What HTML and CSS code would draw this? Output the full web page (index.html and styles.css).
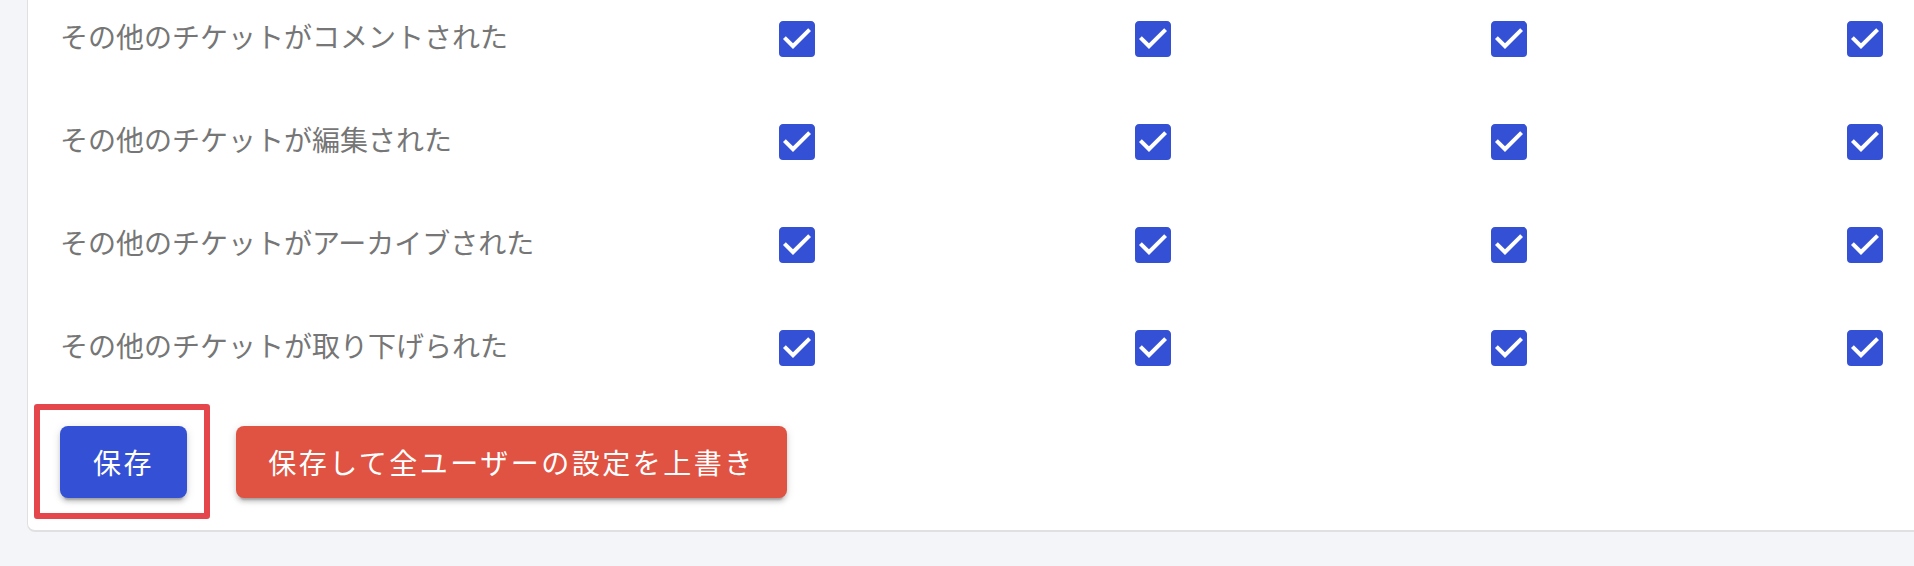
FILE: index.html
```html
<!DOCTYPE html>
<html>
  <head>
    <meta charset="utf-8">
    <title>通知設定</title>
    <link rel="stylesheet" href="styles.css">
  </head>
  <body>
    <div class="card">

      <div class="notify-row">
        <div class="label">その他のチケットがコメントされた</div>
        <div class="cell"><svg class="check" viewBox="0 0 24 24"><path d="M10,17L5,12L6.41,10.58L10,14.17L17.59,6.58L19,8M19,3H5C3.89,3 3,3.89 3,5V19A2,2 0 0,0 5,21H19A2,2 0 0,0 21,19V5C21,3.89 20.1,3 19,3Z"/></svg></div>
        <div class="cell"><svg class="check" viewBox="0 0 24 24"><path d="M10,17L5,12L6.41,10.58L10,14.17L17.59,6.58L19,8M19,3H5C3.89,3 3,3.89 3,5V19A2,2 0 0,0 5,21H19A2,2 0 0,0 21,19V5C21,3.89 20.1,3 19,3Z"/></svg></div>
        <div class="cell"><svg class="check" viewBox="0 0 24 24"><path d="M10,17L5,12L6.41,10.58L10,14.17L17.59,6.58L19,8M19,3H5C3.89,3 3,3.89 3,5V19A2,2 0 0,0 5,21H19A2,2 0 0,0 21,19V5C21,3.89 20.1,3 19,3Z"/></svg></div>
        <div class="cell"><svg class="check" viewBox="0 0 24 24"><path d="M10,17L5,12L6.41,10.58L10,14.17L17.59,6.58L19,8M19,3H5C3.89,3 3,3.89 3,5V19A2,2 0 0,0 5,21H19A2,2 0 0,0 21,19V5C21,3.89 20.1,3 19,3Z"/></svg></div>
      </div>

      <div class="notify-row">
        <div class="label">その他のチケットが編集された</div>
        <div class="cell"><svg class="check" viewBox="0 0 24 24"><path d="M10,17L5,12L6.41,10.58L10,14.17L17.59,6.58L19,8M19,3H5C3.89,3 3,3.89 3,5V19A2,2 0 0,0 5,21H19A2,2 0 0,0 21,19V5C21,3.89 20.1,3 19,3Z"/></svg></div>
        <div class="cell"><svg class="check" viewBox="0 0 24 24"><path d="M10,17L5,12L6.41,10.58L10,14.17L17.59,6.58L19,8M19,3H5C3.89,3 3,3.89 3,5V19A2,2 0 0,0 5,21H19A2,2 0 0,0 21,19V5C21,3.89 20.1,3 19,3Z"/></svg></div>
        <div class="cell"><svg class="check" viewBox="0 0 24 24"><path d="M10,17L5,12L6.41,10.58L10,14.17L17.59,6.58L19,8M19,3H5C3.89,3 3,3.89 3,5V19A2,2 0 0,0 5,21H19A2,2 0 0,0 21,19V5C21,3.89 20.1,3 19,3Z"/></svg></div>
        <div class="cell"><svg class="check" viewBox="0 0 24 24"><path d="M10,17L5,12L6.41,10.58L10,14.17L17.59,6.58L19,8M19,3H5C3.89,3 3,3.89 3,5V19A2,2 0 0,0 5,21H19A2,2 0 0,0 21,19V5C21,3.89 20.1,3 19,3Z"/></svg></div>
      </div>

      <div class="notify-row">
        <div class="label">その他のチケットがアーカイブされた</div>
        <div class="cell"><svg class="check" viewBox="0 0 24 24"><path d="M10,17L5,12L6.41,10.58L10,14.17L17.59,6.58L19,8M19,3H5C3.89,3 3,3.89 3,5V19A2,2 0 0,0 5,21H19A2,2 0 0,0 21,19V5C21,3.89 20.1,3 19,3Z"/></svg></div>
        <div class="cell"><svg class="check" viewBox="0 0 24 24"><path d="M10,17L5,12L6.41,10.58L10,14.17L17.59,6.58L19,8M19,3H5C3.89,3 3,3.89 3,5V19A2,2 0 0,0 5,21H19A2,2 0 0,0 21,19V5C21,3.89 20.1,3 19,3Z"/></svg></div>
        <div class="cell"><svg class="check" viewBox="0 0 24 24"><path d="M10,17L5,12L6.41,10.58L10,14.17L17.59,6.58L19,8M19,3H5C3.89,3 3,3.89 3,5V19A2,2 0 0,0 5,21H19A2,2 0 0,0 21,19V5C21,3.89 20.1,3 19,3Z"/></svg></div>
        <div class="cell"><svg class="check" viewBox="0 0 24 24"><path d="M10,17L5,12L6.41,10.58L10,14.17L17.59,6.58L19,8M19,3H5C3.89,3 3,3.89 3,5V19A2,2 0 0,0 5,21H19A2,2 0 0,0 21,19V5C21,3.89 20.1,3 19,3Z"/></svg></div>
      </div>

      <div class="notify-row">
        <div class="label">その他のチケットが取り下げられた</div>
        <div class="cell"><svg class="check" viewBox="0 0 24 24"><path d="M10,17L5,12L6.41,10.58L10,14.17L17.59,6.58L19,8M19,3H5C3.89,3 3,3.89 3,5V19A2,2 0 0,0 5,21H19A2,2 0 0,0 21,19V5C21,3.89 20.1,3 19,3Z"/></svg></div>
        <div class="cell"><svg class="check" viewBox="0 0 24 24"><path d="M10,17L5,12L6.41,10.58L10,14.17L17.59,6.58L19,8M19,3H5C3.89,3 3,3.89 3,5V19A2,2 0 0,0 5,21H19A2,2 0 0,0 21,19V5C21,3.89 20.1,3 19,3Z"/></svg></div>
        <div class="cell"><svg class="check" viewBox="0 0 24 24"><path d="M10,17L5,12L6.41,10.58L10,14.17L17.59,6.58L19,8M19,3H5C3.89,3 3,3.89 3,5V19A2,2 0 0,0 5,21H19A2,2 0 0,0 21,19V5C21,3.89 20.1,3 19,3Z"/></svg></div>
        <div class="cell"><svg class="check" viewBox="0 0 24 24"><path d="M10,17L5,12L6.41,10.58L10,14.17L17.59,6.58L19,8M19,3H5C3.89,3 3,3.89 3,5V19A2,2 0 0,0 5,21H19A2,2 0 0,0 21,19V5C21,3.89 20.1,3 19,3Z"/></svg></div>
      </div>

      <div class="actions">
        <div class="highlight">
          <button class="btn btn-save" type="button">保存</button>
        </div>
        <button class="btn btn-overwrite" type="button">保存して全ユーザーの設定を上書き</button>
      </div>

    </div>
  </body>
</html>
```

FILE: styles.css
```css
html {
  font-family: "Noto Sans CJK JP", "Noto Sans", sans-serif;
}
body {
  margin: 0;
  background-color: #f4f5f9;
  overflow: hidden;
  height: 566px;
}
.card {
  margin-top: -14px;
  margin-left: 27px;
  width: 2100px;
  background-color: #ffffff;
  border: 1px solid #e0e0e0;
  border-bottom-width: 2px;
  border-radius: 8px;
  padding: 0 0 32px 32px;
}
.notify-row {
  display: grid;
  grid-template-columns: 559px repeat(4, 356px);
  align-items: center;
  height: 103px;
}
.label {
  font-size: 28px;
  line-height: 40px;
  color: #767676;
  margin-top: -5px;
}
.cell {
  display: flex;
  justify-content: center;
}
.check {
  width: 48px;
  height: 48px;
  fill: #3450d5;
}
.actions {
  display: flex;
  align-items: center;
  gap: 49px;
  margin-top: 27px;
}
.highlight {
  position: relative;
  display: flex;
}
.highlight::after {
  content: "";
  position: absolute;
  top: -22px;
  left: -26px;
  right: -23px;
  bottom: -21px;
  border: 6px solid #e5464c;
  border-radius: 3px;
}
.btn {
  font-family: "Noto Sans CJK JP", "Noto Sans", sans-serif;
  font-size: 28px;
  letter-spacing: 2.5px;
  color: #ffffff;
  height: 72px;
  padding: 0 32px;
  border: 0;
  border-radius: 8px;
  box-shadow: 0 6px 2px -4px rgba(0, 0, 0, 0.2), 0 4px 4px 0 rgba(0, 0, 0, 0.14), 0 2px 10px 0 rgba(0, 0, 0, 0.12);
}
.btn-save {
  background-color: #3450d5;
  width: 127px;
}
.btn-overwrite {
  background-color: #e05342;
  width: 551px;
}
```
